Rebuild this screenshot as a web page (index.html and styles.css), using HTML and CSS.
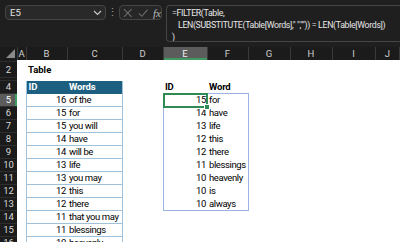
FILE: index.html
```html
<!DOCTYPE html>
<html lang="en">
<head>
    <meta charset="UTF-8">
    <title>Filter</title>
    <link rel="stylesheet" href="styles.css">
</head>
<body>
    <div class="formula-bar">
        <div class="name-box">
            <span>E5</span>
            <svg width="9" height="6" viewBox="0 0 9 6"><path d="M1 1 L4.5 4.5 L8 1" fill="none" stroke="#c8c8c8" stroke-width="1.2"/></svg>
        </div>
        <div class="bar-dots">⋮</div>
        <div class="fx-box">
            <svg width="10" height="10" viewBox="0 0 10 10"><path d="M1 1 L9 9 M9 1 L1 9" stroke="#6e6e6e" stroke-width="1.1"/></svg>
            <svg width="11" height="10" viewBox="0 0 11 10"><path d="M1 5.5 L4 8.5 L10 1.5" fill="none" stroke="#6e6e6e" stroke-width="1.1"/></svg>
            <span class="fx">fx</span>
        </div>
        <div class="formula">
            <div>=FILTER(Table,</div>
            <div class="indent">LEN(SUBSTITUTE(Table[Words]," ","")) = LEN(Table[Words])</div>
            <div>)</div>
        </div>
    </div>

    <table class="sheet">
        <colgroup>
            <col class="w-rh"><col class="w-a"><col class="w-b"><col class="w-c"><col class="w-d">
            <col class="w-e"><col class="w-f"><col class="w-g"><col class="w-h"><col class="w-i"><col>
        </colgroup>
        <thead>
            <tr>
                <th class="corner"><span class="tri"></span></th>
                <th>A</th><th>B</th><th>C</th><th>D</th><th class="sel">E</th>
                <th>F</th><th>G</th><th>H</th><th>I</th><th>J</th>
            </tr>
        </thead>
        <tbody>
            <tr class="hidden-row"><th></th><td colspan="10"></td></tr>
            <tr class="title-row"><th>2</th><td></td><td class="title">Table</td><td colspan="8"></td></tr>
            <tr class="hidden-row tall"><th></th><td colspan="10"></td></tr>
            <tr>
                <th>4</th><td></td>
                <td class="t-head t-left">ID</td><td class="t-head t-right">Words</td>
                <td></td><td class="bold">ID</td><td class="bold word">Word</td><td></td><td></td><td></td><td></td>
            </tr>
            <tr>
                <th class="sel">5</th><td></td>
                <td class="num t-left">16</td><td class="txt t-right">of the</td>
                <td></td><td class="num spill-l spill-t active">15</td><td class="txt spill-r spill-t">for</td><td></td><td></td><td></td><td></td>
            </tr>
            <tr>
                <th>6</th><td></td>
                <td class="num t-left">15</td><td class="txt t-right">for</td>
                <td></td><td class="num spill-l">14</td><td class="txt spill-r">have</td><td></td><td></td><td></td><td></td>
            </tr>
            <tr>
                <th>7</th><td></td>
                <td class="num t-left">15</td><td class="txt t-right">you will</td>
                <td></td><td class="num spill-l">13</td><td class="txt spill-r">life</td><td></td><td></td><td></td><td></td>
            </tr>
            <tr>
                <th>8</th><td></td>
                <td class="num t-left">14</td><td class="txt t-right">have</td>
                <td></td><td class="num spill-l">12</td><td class="txt spill-r">this</td><td></td><td></td><td></td><td></td>
            </tr>
            <tr>
                <th>9</th><td></td>
                <td class="num t-left">14</td><td class="txt t-right">will be</td>
                <td></td><td class="num spill-l">12</td><td class="txt spill-r">there</td><td></td><td></td><td></td><td></td>
            </tr>
            <tr>
                <th>10</th><td></td>
                <td class="num t-left">13</td><td class="txt t-right">life</td>
                <td></td><td class="num spill-l">11</td><td class="txt spill-r">blessings</td><td></td><td></td><td></td><td></td>
            </tr>
            <tr>
                <th>11</th><td></td>
                <td class="num t-left">13</td><td class="txt t-right">you may</td>
                <td></td><td class="num spill-l">10</td><td class="txt spill-r">heavenly</td><td></td><td></td><td></td><td></td>
            </tr>
            <tr>
                <th>12</th><td></td>
                <td class="num t-left">12</td><td class="txt t-right">this</td>
                <td></td><td class="num spill-l">10</td><td class="txt spill-r">is</td><td></td><td></td><td></td><td></td>
            </tr>
            <tr>
                <th>13</th><td></td>
                <td class="num t-left">12</td><td class="txt t-right">there</td>
                <td></td><td class="num spill-l spill-b">10</td><td class="txt spill-r spill-b">always</td><td></td><td></td><td></td><td></td>
            </tr>
            <tr>
                <th>14</th><td></td>
                <td class="num t-left">11</td><td class="txt t-right">that you may</td>
                <td></td><td></td><td></td><td></td><td></td><td></td><td></td>
            </tr>
            <tr>
                <th>15</th><td></td>
                <td class="num t-left">11</td><td class="txt t-right">blessings</td>
                <td></td><td></td><td></td><td></td><td></td><td></td><td></td>
            </tr>
            <tr>
                <th>16</th><td></td>
                <td class="num t-left">10</td><td class="txt t-right">heavenly</td>
                <td></td><td></td><td></td><td></td><td></td><td></td><td></td>
            </tr>
        </tbody>
    </table>
</body>
</html>
```

FILE: styles.css
```css
body {
    margin: 0;
    background: #1f1f1f;
    font-family: Roboto, "Liberation Sans", sans-serif;
    overflow: hidden;
    height: 242px;
}
.formula-bar {
    display: flex;
    align-items: flex-start;
    height: 47px;
    padding: 5px 0 0 5px;
    box-sizing: border-box;
    color: #e6e6e6;
    font-size: 9.5px;
}
.name-box {
    flex-shrink: 0;
    display: flex;
    justify-content: space-between;
    align-items: center;
    width: 101px;
    height: 15px;
    padding: 0 3px 0 4px;
    box-sizing: border-box;
    border: 1px solid #454545;
    border-radius: 4px;
    background: #292929;
}
.bar-dots {
    flex-shrink: 0;
    width: 13px;
    text-align: center;
    color: #9a9a9a;
    font-size: 11px;
    line-height: 15px;
}
.fx-box {
    flex-shrink: 0;
    display: flex;
    align-items: center;
    gap: 5px;
    width: 43px;
    height: 15px;
    padding-left: 3px;
    box-sizing: border-box;
    border: 1px solid #454545;
    border-radius: 4px;
    background: #262626;
}
.fx {
    font-family: "Liberation Serif", serif;
    font-style: italic;
    font-size: 11px;
    color: #bdbdbd;
}
.formula {
    flex: 1;
    min-width: 0;
    overflow: hidden;
    margin-left: 4px;
    height: 37px;
    padding: 1px 0 0 5px;
    box-sizing: border-box;
    border: 1px solid #454545;
    border-right: none;
    border-radius: 4px 0 0 4px;
    font-size: 8.8px;
    line-height: 12px;
    white-space: nowrap;
    letter-spacing: -0.35px;
}
.indent {
    padding-left: 6px;
}

.sheet {
    border-collapse: collapse;
    table-layout: fixed;
    width: 400px;
    font-size: 9.5px;
    color: #000;
}
.w-rh { width: 17px; }
.w-a { width: 9px; }
.w-b { width: 41px; }
.w-c { width: 55px; }
.w-d { width: 41px; }
.w-e { width: 44px; }
.w-f { width: 41px; }
.w-g { width: 42px; }
.w-h { width: 42px; }
.w-i { width: 43px; }

.sheet thead th {
    height: 13px;
    padding: 0;
    background: #1b1b1b;
    color: #cfcfcf;
    font-weight: normal;
    border-right: 1px solid #3a3a3a;
    line-height: 13px;
}
.sheet thead th.sel {
    background: #5c5c5c;
    color: #f0f0f0;
    box-shadow: inset 0 -2px 0 #3f9a61;
}
.corner {
    position: relative;
}
.tri {
    position: absolute;
    right: 2px;
    bottom: 2px;
    width: 0;
    height: 0;
    border-left: 9px solid transparent;
    border-bottom: 9px solid #8a8a8a;
}
.sheet tbody th {
    height: 12px;
    padding: 0;
    background: #1b1b1b;
    color: #d8d8d8;
    font-weight: normal;
    text-align: center;
    border-bottom: 1px solid #2e2e2e;
    line-height: 12px;
}
.sheet tbody th.sel {
    background: #5c5c5c;
    color: #fff;
    box-shadow: inset -2px 0 0 #3f9a61;
}
.sheet td {
    height: 12px;
    padding: 0 2px;
    background: #fff;
    white-space: nowrap;
    overflow: visible;
    line-height: 12px;
    letter-spacing: -0.4px;
}
.sheet .hidden-row th,
.sheet .hidden-row td {
    height: 1px;
    line-height: 0;
    font-size: 0;
}
.sheet .hidden-row.tall th,
.sheet .hidden-row.tall td {
    height: 2px;
}
.sheet .title-row th,
.sheet .title-row td {
    height: 15px;
    line-height: 15px;
}
.sheet .title {
    font-weight: bold;
    letter-spacing: 0;
}
.sheet .t-head {
    background: #1d5f80;
    color: #fff;
    font-weight: bold;
    letter-spacing: -0.1px;
}
.t-left {
    border-left: 1px solid #9fc1dc;
}
.t-right {
    border-right: 1px solid #9fc1dc;
}
.num.t-left,
.txt.t-right {
    border-bottom: 1px solid #9fc1dc;
}
.sheet .num {
    text-align: right;
    padding-right: 1px;
}
.sheet .txt {
    padding-left: 2px;
}
.sheet .bold {
    font-weight: bold;
    letter-spacing: -0.2px;
}
.word {
    padding-left: 2px;
}
.spill-l { border-left: 1px solid #9db4e6; }
.spill-r { border-right: 1px solid #9db4e6; }
.spill-t { border-top: 1px solid #9db4e6; }
.spill-b { border-bottom: 1px solid #9db4e6; }
.active {
    position: relative;
}
.active::after {
    content: "";
    position: absolute;
    left: -1px;
    top: -1px;
    right: -1px;
    bottom: -1px;
    border: 2px solid #2f8a55;
}
.active::before {
    content: "";
    position: absolute;
    right: -3px;
    bottom: -3px;
    width: 4px;
    height: 4px;
    background: #2f8a55;
    border: 1px solid #fff;
    z-index: 1;
}
```
